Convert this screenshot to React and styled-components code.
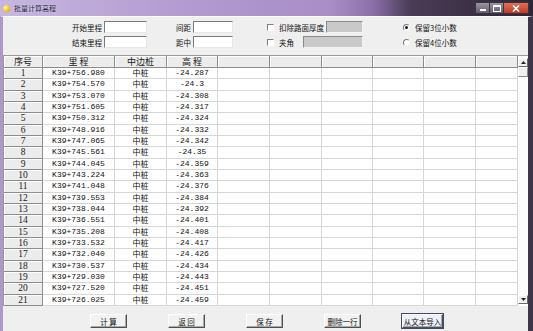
import React from 'react';
import styled, { createGlobalStyle } from 'styled-components';

const GlobalStyle = createGlobalStyle`
  html, body {
    margin: 0;
    padding: 0;
    background: #ffffff;
  }
  body {
    font-family: "Noto Sans CJK SC", "Liberation Sans", sans-serif;
  }
`;

const rows = [
  ['K39+756.980', '-24.287'],
  ['K39+754.570', '-24.3'],
  ['K39+753.070', '-24.308'],
  ['K39+751.605', '-24.317'],
  ['K39+750.312', '-24.324'],
  ['K39+748.916', '-24.332'],
  ['K39+747.065', '-24.342'],
  ['K39+745.561', '-24.35'],
  ['K39+744.045', '-24.359'],
  ['K39+743.224', '-24.363'],
  ['K39+741.048', '-24.376'],
  ['K39+739.553', '-24.384'],
  ['K39+738.044', '-24.392'],
  ['K39+736.551', '-24.401'],
  ['K39+735.208', '-24.408'],
  ['K39+733.532', '-24.417'],
  ['K39+732.040', '-24.426'],
  ['K39+730.537', '-24.434'],
  ['K39+729.030', '-24.443'],
  ['K39+727.520', '-24.451'],
  ['K39+726.025', '-24.459'],
];

const headers = ['序号', '里 程', '中边桩', '高 程', '', '', '', '', '', ''];
const EMPTY_COLS = 6;

const App = () => {
  return (
    <>
      <GlobalStyle />
      <Window>
        <TitleBar>
          <TitleIcon />
          <TitleText>批量计算高程</TitleText>
          <CaptionButtons>
            <CaptionBtn>
              <svg width='8' height='6' viewBox='0 0 8 6'>
                <rect x='1' y='4' width='6' height='2' fill='#fff' />
              </svg>
            </CaptionBtn>
            <CaptionBtn>
              <svg width='8' height='7' viewBox='0 0 8 7'>
                <rect x='0.5' y='0.5' width='7' height='6' fill='none' stroke='#fff' />
                <rect x='0.5' y='0.5' width='7' height='1.5' fill='#fff' />
              </svg>
            </CaptionBtn>
            <CloseBtn>
              <svg width='8' height='7' viewBox='0 0 8 7'>
                <path d='M1 0.5 L7 6.5 M7 0.5 L1 6.5' stroke='#fff' strokeWidth='1.6' />
              </svg>
            </CloseBtn>
          </CaptionButtons>
        </TitleBar>

        <Client>
          <Form>
            <FieldGroup $ml={69}>
              <FieldRow>
                <Label $w={30}>开始里程</Label>
                <TextBox $w={43} />
              </FieldRow>
              <FieldRow>
                <Label $w={30}>结束里程</Label>
                <TextBox $w={43} />
              </FieldRow>
            </FieldGroup>

            <FieldGroup $ml={29}>
              <FieldRow>
                <Label $w={15}>间距</Label>
                <TextBox $w={40} />
              </FieldRow>
              <FieldRow>
                <Label $w={15}>距中</Label>
                <TextBox $w={40} />
              </FieldRow>
            </FieldGroup>

            <FieldGroup $ml={34}>
              <CheckRow>
                <CheckBox />
                <CheckLabel>扣除路面厚度</CheckLabel>
                <GreyBox $w={37} />
              </CheckRow>
              <CheckRow>
                <CheckBox />
                <CheckLabel>夹角</CheckLabel>
                <GreyBox $w={60} />
              </CheckRow>
            </FieldGroup>

            <FieldGroup $ml={40}>
              <CheckRow>
                <Radio $checked />
                <CheckLabel>保留3位小数</CheckLabel>
              </CheckRow>
              <CheckRow>
                <Radio />
                <CheckLabel>保留4位小数</CheckLabel>
              </CheckRow>
            </FieldGroup>
          </Form>

          <GridFrame>
            <Table>
              {headers.map((h, i) => (
                <HeadCell key={'h' + i}>{h}</HeadCell>
              ))}
              {rows.map(([mile, elev], i) => (
                <React.Fragment key={i}>
                  <RowHead>{i + 1}</RowHead>
                  <Cell $mono>{mile}</Cell>
                  <Cell>中桩</Cell>
                  <Cell $mono>{elev}</Cell>
                  {Array.from({ length: EMPTY_COLS }).map((_, j) => (
                    <Cell key={j} />
                  ))}
                </React.Fragment>
              ))}
            </Table>
            <ScrollBar>
              <ScrollArrow>
                <svg width='5' height='3' viewBox='0 0 5 3'>
                  <path d='M0 3 L2.5 0 L5 3 Z' fill='#222' />
                </svg>
              </ScrollArrow>
              <ScrollThumb />
              <ScrollTrack />
              <ScrollArrow>
                <svg width='5' height='3' viewBox='0 0 5 3'>
                  <path d='M0 0 L2.5 3 L5 0 Z' fill='#222' />
                </svg>
              </ScrollArrow>
            </ScrollBar>
          </GridFrame>

          <ButtonBar>
            <Button>计 算</Button>
            <Button>返 回</Button>
            <Button>保 存</Button>
            <Button>删除一行</Button>
            <Button $default $w={41}>从文本导入</Button>
          </ButtonBar>
        </Client>
      </Window>
    </>
  );
};

export default App;

const Window = styled.div`
  width: 533px;
  height: 331px;
  display: flex;
  flex-direction: column;
  overflow: hidden;
`;

const TitleBar = styled.div`
  height: 16px;
  flex-shrink: 0;
  display: flex;
  align-items: center;
  padding-left: 3px;
  background: linear-gradient(
    90deg,
    #c7b7e0 0%,
    #b39ad0 35%,
    #a88dc7 62%,
    #8a6fa8 70%,
    #4a3c56 77%,
    #2e2636 100%
  );
`;

const TitleIcon = styled.span`
  width: 7px;
  height: 7px;
  border-radius: 50%;
  background: radial-gradient(circle at 35% 35%, #fff6b0, #f2c41a 60%, #c8900a);
`;

const TitleText = styled.span`
  margin-left: 4px;
  font-size: 7px;
  color: #1c1a40;
  line-height: 16px;
  text-shadow: 0 0 2px rgba(255, 255, 255, 0.8);
`;

const CaptionButtons = styled.div`
  margin-left: auto;
  margin-right: 4px;
  display: flex;
  align-self: flex-start;
  margin-top: 2px;
`;

const CaptionBtn = styled.div`
  width: 13px;
  height: 10px;
  display: flex;
  align-items: center;
  justify-content: center;
  background: linear-gradient(#9a93a3, #645d6c);
  border: 1px solid #3a3440;
  border-right: none;
`;

const CloseBtn = styled(CaptionBtn)`
  width: 24px;
  background: linear-gradient(#e0705a, #c13a22);
  border-right: 1px solid #3a3440;
`;

const Client = styled.div`
  flex: 1;
  display: flex;
  flex-direction: column;
  background: #efefef;
  border-left: 3px solid #ad98c6;
  border-right: 5px solid #3f3548;
  border-top: 1px solid #fbfbfb;
`;

const Form = styled.div`
  display: flex;
  align-items: flex-start;
  padding-top: 4px;
  height: 30px;
  margin-bottom: 4px;
`;

const FieldGroup = styled.div`
  margin-left: ${(p) => p.$ml}px;
  display: flex;
  flex-direction: column;
  gap: 3px;
`;

const FieldRow = styled.div`
  display: flex;
  align-items: center;
  gap: 2px;
  height: 12px;
`;

const Label = styled.span`
  width: ${(p) => p.$w}px;
  text-align: right;
  font-size: 7.5px;
  color: #111;
  white-space: nowrap;
`;

const TextBox = styled.div`
  width: ${(p) => p.$w}px;
  height: 12px;
  box-sizing: border-box;
  background: #ffffff;
  border-top: 1px solid #7a7a7a;
  border-left: 1px solid #7a7a7a;
  border-right: 1px solid #e8e8e8;
  border-bottom: 1px solid #e8e8e8;
`;

const CheckRow = styled.div`
  display: flex;
  align-items: center;
  height: 12px;
  width: 96px;
`;

const CheckBox = styled.span`
  width: 7px;
  height: 7px;
  box-sizing: border-box;
  background: #ffffff;
  border-top: 1px solid #808080;
  border-left: 1px solid #808080;
  border-right: 1px solid #ffffff;
  border-bottom: 1px solid #ffffff;
  flex-shrink: 0;
`;

const CheckLabel = styled.span`
  margin-left: 5px;
  font-size: 7.5px;
  color: #111;
  white-space: nowrap;
`;

const GreyBox = styled.div`
  margin-left: auto;
  width: ${(p) => p.$w}px;
  height: 12px;
  box-sizing: border-box;
  background: #c9c9c9;
  border-top: 1px solid #8a8a8a;
  border-left: 1px solid #8a8a8a;
  border-right: 1px solid #f4f4f4;
  border-bottom: 1px solid #f4f4f4;
`;

const Radio = styled.span`
  width: 7px;
  height: 7px;
  box-sizing: border-box;
  border-radius: 50%;
  background: #ffffff;
  border: 1px solid;
  border-color: #7a7a7a #f4f4f4 #f4f4f4 #7a7a7a;
  display: flex;
  align-items: center;
  justify-content: center;
  flex-shrink: 0;
  &::after {
    content: '';
    width: 3px;
    height: 3px;
    border-radius: 50%;
    background: ${(p) => (p.$checked ? '#1a1a1a' : 'transparent')};
  }
`;

const GridFrame = styled.div`
  height: 251px;
  display: flex;
  box-sizing: border-box;
  border-top: 1px solid #9a9a9a;
  border-left: 1px solid #9a9a9a;
  background: #ffffff;
`;

const Table = styled.div`
  display: grid;
  grid-template-columns: 39px 72px 52px 51px 52px 52px 51px 51px 52px 42px;
  grid-template-rows: 12px repeat(21, 11.33px);
  align-content: start;
`;

const HeadCell = styled.div`
  box-sizing: border-box;
  background: #ececec;
  border-right: 1px solid #8c8c8c;
  border-bottom: 1px solid #8c8c8c;
  box-shadow: inset 1px 1px #ffffff;
  font-size: 9px;
  line-height: 11px;
  color: #1a1a1a;
  text-align: center;
  white-space: pre;
`;

const RowHead = styled.div`
  box-sizing: border-box;
  background: #ececec;
  border-right: 1px solid #8c8c8c;
  border-bottom: 1px solid #8c8c8c;
  box-shadow: inset 1px 1px #ffffff;
  font-family: "Liberation Serif", serif;
  font-size: 9.5px;
  line-height: 10px;
  color: #1a1a1a;
  text-align: center;
`;

const Cell = styled.div`
  box-sizing: border-box;
  border-right: 1px solid #d6d6d6;
  border-bottom: 1px solid #d6d6d6;
  font-family: ${(p) =>
    p.$mono ? '"Liberation Mono", monospace' : '"Noto Sans CJK SC", sans-serif'};
  font-size: 8px;
  line-height: 10px;
  color: #111;
  text-align: center;
  white-space: nowrap;
`;

const ScrollBar = styled.div`
  width: 10px;
  margin-left: auto;
  display: flex;
  flex-direction: column;
  padding-top: 2px;
  padding-bottom: 2px;
  box-sizing: border-box;
`;

const ScrollArrow = styled.div`
  height: 9px;
  display: flex;
  align-items: center;
  justify-content: center;
  box-sizing: border-box;
  background: #f0f0f0;
  border-top: 1px solid #ffffff;
  border-left: 1px solid #ffffff;
  border-right: 1px solid #6a6a6a;
  border-bottom: 1px solid #6a6a6a;
`;

const ScrollThumb = styled.div`
  height: 10px;
  box-sizing: border-box;
  background: #f0f0f0;
  border-top: 1px solid #ffffff;
  border-left: 1px solid #ffffff;
  border-right: 1px solid #8a8a8a;
  border-bottom: 1px solid #8a8a8a;
`;

const ScrollTrack = styled.div`
  flex: 1;
  background: #fcfcfc;
`;

const ButtonBar = styled.div`
  display: flex;
  gap: 41px;
  padding-left: 87px;
  padding-top: 8px;
`;

const Button = styled.div`
  width: ${(p) => p.$w || 37}px;
  height: 14px;
  box-sizing: border-box;
  display: flex;
  align-items: center;
  justify-content: center;
  background: ${(p) => (p.$default ? '#eef2f8' : '#f2f2f2')};
  border: 1px solid;
  border-color: #ffffff #505050 #505050 #ffffff;
  outline: ${(p) => (p.$default ? '1px solid #3c4a70' : 'none')};
  box-shadow: inset -1px -1px #a8a8a8;
  font-size: 7.5px;
  color: #111;
  white-space: pre;
`;
